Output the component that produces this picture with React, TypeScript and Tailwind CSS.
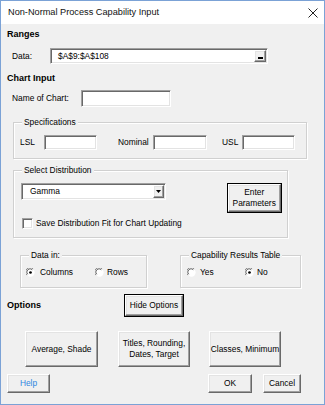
import React from 'react';

const btn3d =
  'flex items-center justify-center text-center bg-[#f0f0f0] border border-t-white border-l-white border-r-[#696969] border-b-[#696969] shadow-[inset_-1px_-1px_0_#a0a0a0,inset_1px_1px_0_#e3e3e3]';
const sunken =
  'bg-white border border-t-[#a0a0a0] border-l-[#a0a0a0] border-r-white border-b-white shadow-[inset_1px_1px_0_#696969,inset_-1px_-1px_0_#e3e3e3]';

const Group: React.FC<{ title: string; className?: string; children?: React.ReactNode }> = ({ title, className, children }) => (
  <div className={`relative shrink-0 border border-[#d0d0d0] shadow-[inset_1px_1px_0_#fff,1px_1px_0_#fff] ${className ?? ''}`}>
    <span className="absolute left-[8px] top-[-6px] bg-[#f0f0f0] px-[2px] leading-[11px]">{title}</span>
    {children}
  </div>
);

const Radio: React.FC<{ checked?: boolean }> = ({ checked }) => (
  <svg width="9" height="9" viewBox="0 0 12 12" className="shrink-0">
    <circle cx="6" cy="6" r="5.5" fill="#fff" />
    <path d="M1.2 9.5 A5.5 5.5 0 0 1 9.5 1.2" stroke="#808080" strokeWidth="1.2" fill="none" />
    <path d="M2.4 8.4 A4 4 0 0 1 8.4 2.4" stroke="#404040" strokeWidth="1" fill="none" />
    {checked && <circle cx="6" cy="6" r="1.8" fill="#000" />}
  </svg>
);

const Button: React.FC<{ className?: string; focused?: boolean; children?: React.ReactNode }> = ({ className, focused, children }) =>
  focused ? (
    <div className={`flex shrink-0 border border-black ${className ?? ''}`}>
      <div className={`${btn3d} w-full h-full`}>{children}</div>
    </div>
  ) : (
    <div className={`${btn3d} shrink-0 ${className ?? ''}`}>{children}</div>
  );

export default function App() {
  return (
    <div className="w-[325px] h-[405px] border border-[#7ba2d6] bg-[#f0f0f0] font-['Liberation_Sans',Arial,sans-serif] text-[8.4px] text-black flex flex-col overflow-hidden">
      {/* title bar */}
      <div className="h-[23px] shrink-0 bg-white flex items-center justify-between pl-[7px] pr-[6px]">
        <span className="text-[9.2px] text-[#111]">Non-Normal Process Capability Input</span>
        <svg width="10" height="10" viewBox="0 0 10 10">
          <path d="M0.5 0.5 L9.5 9.5 M9.5 0.5 L0.5 9.5" stroke="#222" strokeWidth="1" />
        </svg>
      </div>

      <div className="h-[22px] shrink-0 flex items-center pl-[6px] font-bold text-[9px]">Ranges</div>

      <div className="mt-[2px] h-[16px] shrink-0 flex items-center pl-[11px]">
        <span className="w-[38px]">Data:</span>
        <div className={`${sunken} w-[218px] h-full flex items-center justify-between pl-[7px] pr-[1px]`}>
          <span>$A$9:$A$108</span>
          <div className={`${btn3d} w-[12px] h-[12px] items-end pb-[2px]`}>
            <div className="w-[5px] h-[2px] bg-black" />
          </div>
        </div>
      </div>

      <div className="mt-[6px] h-[18px] shrink-0 flex items-center pl-[6px] font-bold text-[9px]">Chart Input</div>

      <div className="mt-[2px] h-[17px] shrink-0 flex items-center pl-[11px]">
        <span className="w-[69px]">Name of Chart:</span>
        <div className={`${sunken} w-[90px] h-full`} />
      </div>

      <Group title="Specifications" className="mt-[15px] ml-[12px] w-[294px] h-[37px]">
        <div className="mt-[12px] h-[15px] flex items-center pl-[6px]">
          <span className="w-[24px]">LSL</span>
          <div className={`${sunken} w-[53px] h-full`} />
          <span className="ml-[21px] w-[35px]">Nominal</span>
          <div className={`${sunken} w-[54px] h-full`} />
          <span className="ml-[15px] w-[20px]">USL</span>
          <div className={`${sunken} w-[53px] h-full`} />
        </div>
      </Group>

      <Group title="Select Distribution" className="mt-[11px] ml-[12px] w-[275px] h-[68px]">
        <div className="flex items-start pt-[12px] pl-[7px]">
          <div className="flex flex-col">
            <div className={`${sunken} w-[145px] h-[17px] flex items-center justify-between pl-[8px] pr-[1px]`}>
              <span>Gamma</span>
              <div className={`${btn3d} w-[11px] h-[13px]`}>
                <svg width="5" height="3" viewBox="0 0 5 3">
                  <path d="M0 0 H5 L2.5 3 Z" fill="#000" />
                </svg>
              </div>
            </div>
            <div className="mt-[18px] h-[11px] flex items-center">
              <div className={`${sunken} ml-[1px] w-[11px] h-[11px]`} />
              <span className="ml-[3px]">Save Distribution Fit for Chart Updating</span>
            </div>
          </div>
          <Button focused className="ml-[45px] w-[55px] h-[30px]">
            <span className="leading-[11px]">Enter<br />Parameters</span>
          </Button>
        </div>
      </Group>

      <div className="mt-[17px] h-[33px] shrink-0 flex">
        <Group title="Data in:" className="ml-[19px] w-[127px] h-full">
          <div className="mt-[10px] h-[12px] flex items-center pl-[5px]">
            <div className="w-[69px] flex items-center">
              <Radio checked />
              <span className="ml-[5px]">Columns</span>
            </div>
            <Radio />
            <span className="ml-[3px]">Rows</span>
          </div>
        </Group>
        <Group title="Capability Results Table" className="ml-[33px] w-[121px] h-full">
          <div className="mt-[10px] h-[12px] flex items-center pl-[6px]">
            <div className="w-[58px] flex items-center">
              <Radio />
              <span className="ml-[4px]">Yes</span>
            </div>
            <Radio checked />
            <span className="ml-[3px]">No</span>
          </div>
        </Group>
      </div>

      <div className="mt-[6px] h-[23px] shrink-0 flex items-center">
        <span className="w-[123px] pl-[6px] font-bold text-[9px]">Options</span>
        <Button focused className="w-[60px] h-full">Hide Options</Button>
      </div>

      <div className="mt-[14px] h-[36px] shrink-0 flex">
        <Button className="ml-[24px] w-[73px] h-full">Average, Shade</Button>
        <Button className="ml-[20px] w-[72px] h-full">
          <span className="leading-[11px]">Titles, Rounding,<br />Dates, Target</span>
        </Button>
        <Button className="ml-[19px] w-[72px] h-full">Classes, Minimum</Button>
      </div>

      <div className="mt-[7px] h-[19px] shrink-0 flex">
        <Button className="ml-[6px] w-[43px] h-full text-[#2f86e0]">Help</Button>
        <Button className="ml-[158px] w-[44px] h-full">OK</Button>
        <Button className="ml-[11px] w-[38px] h-full">Cancel</Button>
      </div>
    </div>
  );
}
